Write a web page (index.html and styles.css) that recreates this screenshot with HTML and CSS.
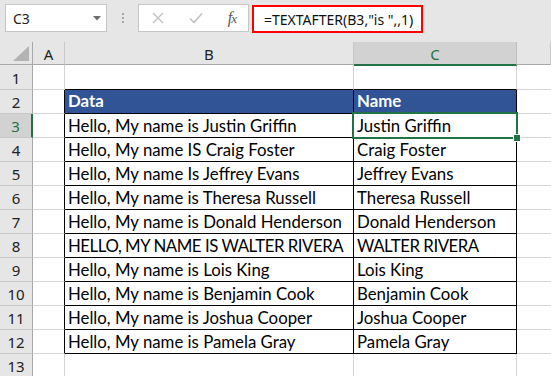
FILE: index.html
```html
<!DOCTYPE html>
<html>
<head>
<meta charset="utf-8">
<link rel="stylesheet" href="styles.css">
</head>
<body>
<div class="app">
  <div class="toolbar">
    <div class="namebox">
      <span class="ref">C3</span>
      <svg class="dd" width="8" height="5" viewBox="0 0 8 5"><path d="M0 0H8L4 4.5Z" fill="#6e6e6e"/></svg>
    </div>
    <div class="grip"><i></i><i></i><i></i></div>
    <div class="fxbox">
      <svg width="12" height="12" viewBox="0 0 12 12"><path d="M1 1L11 11M11 1L1 11" stroke="#c2c2c2" stroke-width="1.4" fill="none"/></svg>
      <svg width="14" height="12" viewBox="0 0 14 12"><path d="M1 6.5L5 10.5L13 1.5" stroke="#c2c2c2" stroke-width="1.6" fill="none"/></svg>
      <span class="fx">f<span class="fxx">x</span></span>
    </div>
    <div class="formula">=TEXTAFTER(B3,"is ",,1)</div>
  </div>

  <div class="sheet">
    <div class="hd corner"><svg width="16" height="15" viewBox="0 0 16 15"><path d="M16 0V15H0Z" fill="#b3b3b3"/></svg></div>
    <div class="hd col">A</div>
    <div class="hd col">B</div>
    <div class="hd col sel">C</div>
    <div class="hd col"></div>

    <div class="rn">1</div><div class="c"></div><div class="c tb"></div><div class="c tb"></div><div class="c"></div>
    <div class="rn">2</div><div class="c tl"></div><div class="c t th">Data</div><div class="c t th">Name</div><div class="c"></div>
    <div class="rn sel">3</div><div class="c tl"></div><div class="c t">Hello, My name is Justin Griffin</div><div class="c t active">Justin Griffin<span class="handle"></span></div><div class="c"></div>
    <div class="rn">4</div><div class="c tl"></div><div class="c t">Hello, My name IS Craig Foster</div><div class="c t">Craig Foster</div><div class="c"></div>
    <div class="rn">5</div><div class="c tl"></div><div class="c t">Hello, My name Is Jeffrey Evans</div><div class="c t">Jeffrey Evans</div><div class="c"></div>
    <div class="rn">6</div><div class="c tl"></div><div class="c t">Hello, My name is Theresa Russell</div><div class="c t">Theresa Russell</div><div class="c"></div>
    <div class="rn">7</div><div class="c tl"></div><div class="c t">Hello, My name is Donald Henderson</div><div class="c t">Donald Henderson</div><div class="c"></div>
    <div class="rn">8</div><div class="c tl"></div><div class="c t caps">HELLO, MY NAME IS WALTER RIVERA</div><div class="c t caps">WALTER RIVERA</div><div class="c"></div>
    <div class="rn">9</div><div class="c tl"></div><div class="c t">Hello, My name is Lois King</div><div class="c t">Lois King</div><div class="c"></div>
    <div class="rn">10</div><div class="c tl"></div><div class="c t">Hello, My name is Benjamin Cook</div><div class="c t">Benjamin Cook</div><div class="c"></div>
    <div class="rn">11</div><div class="c tl"></div><div class="c t">Hello, My name is Joshua Cooper</div><div class="c t">Joshua Cooper</div><div class="c"></div>
    <div class="rn">12</div><div class="c tl"></div><div class="c t">Hello, My name is Pamela Gray</div><div class="c t">Pamela Gray</div><div class="c"></div>
    <div class="rn">13</div><div class="c"></div><div class="c"></div><div class="c"></div><div class="c"></div>
  </div>
</div>
</body>
</html>
```
FILE: styles.css
```css
* { box-sizing: border-box; }
html, body { margin: 0; padding: 0; }
body { background: #ffffff; width: 551px; height: 376px; overflow: hidden; }
.app { width: 551px; height: 376px; background: #e6e6e6; }

.toolbar {
  height: 42px;
  display: flex;
  align-items: flex-start;
  padding: 4px 0 0 5px;
  font-family: "Noto Sans", "Open Sans", sans-serif;
}
.namebox {
  width: 102px;
  height: 28px;
  background: #fff;
  border: 1px solid #c6c6c6;
  display: flex;
  align-items: center;
  justify-content: space-between;
  padding: 0 5px 0 7px;
  font-size: 14px;
  color: #222;
}
.grip {
  width: 31px;
  height: 28px;
  display: flex;
  flex-direction: column;
  align-items: center;
  justify-content: center;
  gap: 2px;
}
.grip i { display: block; width: 2px; height: 2px; background: #a8a8a8; }
.fxbox {
  width: 111px;
  height: 28px;
  background: #fff;
  border: 1px solid #c6c6c6;
  display: flex;
  align-items: center;
  justify-content: space-between;
  padding: 0 12px 0 13px;
}
.fx {
  font-family: "Liberation Serif", serif;
  font-style: italic;
  font-size: 16px;
  color: #595959;
  letter-spacing: -1px;
}
.fxx { font-size: 13px; }
.formula {
  margin-left: 3px;
  margin-top: 1px;
  width: 171px;
  height: 28px;
  background: #fff;
  border: 2px solid #ff0000;
  padding-left: 10px;
  display: flex;
  align-items: center;
  font-size: 14px;
  color: #111;
  white-space: nowrap;
}

.sheet {
  display: grid;
  grid-template-columns: 33px 32px 289px 163px 34px;
  grid-template-rows: 23px 25px repeat(12, 24px);
  background: #fff;
  font-family: "Lato", "Liberation Sans", sans-serif;
}
.hd {
  background: #e6e6e6;
  border-right: 1px solid #c8c8c8;
  border-bottom: 1px solid #a9a9a9;
  display: flex;
  align-items: center;
  justify-content: center;
  font-family: "Noto Sans", "Open Sans", sans-serif;
  font-size: 15px;
  color: #222;
  padding-top: 1px;
}
.hd.corner { justify-content: flex-end; align-items: flex-end; padding: 0 3px 3px 0; border-right-color: #a9a9a9; }
.hd.col:last-child { border-right: none; }
.hd.sel {
  background: #d2d2d2;
  color: #217346;
  border-bottom: 2px solid #217346;
  border-right-color: #bdbdbd;
  margin-bottom: -1px;
  position: relative;
  z-index: 1;
}
.rn {
  background: #e6e6e6;
  border-right: 1px solid #a9a9a9;
  border-bottom: 1px solid #c8c8c8;
  display: flex;
  align-items: center;
  justify-content: center;
  font-family: "Noto Sans", "Open Sans", sans-serif;
  font-size: 15px;
  color: #222;
  padding-top: 1px;
}
.rn.sel {
  background: #d2d2d2;
  color: #217346;
  border-right: 2px solid #217346;
}
.c {
  border-right: 1px solid #d4d4d4;
  border-bottom: 1px solid #d4d4d4;
  display: flex;
  align-items: flex-end;
  padding: 0 0 1px 3px;
  font-size: 16.8px;
  line-height: 20px;
  color: #000;
  white-space: nowrap;
  overflow: visible;
}
.c.caps { letter-spacing: -0.45px; }
.c:nth-child(5n) { border-right: none; }
.c.tb { border-bottom-color: #000; }
.c.tl { border-right-color: #000; }
.c.t { border-right-color: #000; border-bottom-color: #000; }
.c.th {
  background: #305496;
  color: #fff;
  font-weight: bold;
  padding-bottom: 2px;
}
.c.active { position: relative; }
.c.active::before {
  content: "";
  position: absolute;
  left: -2px;
  top: -2px;
  right: -2px;
  bottom: -2px;
  border: 2px solid #217346;
  pointer-events: none;
}
.handle {
  position: absolute;
  right: -4px;
  bottom: -4px;
  width: 6px;
  height: 6px;
  background: #217346;
  outline: 1px solid #fff;
  z-index: 2;
}
```
